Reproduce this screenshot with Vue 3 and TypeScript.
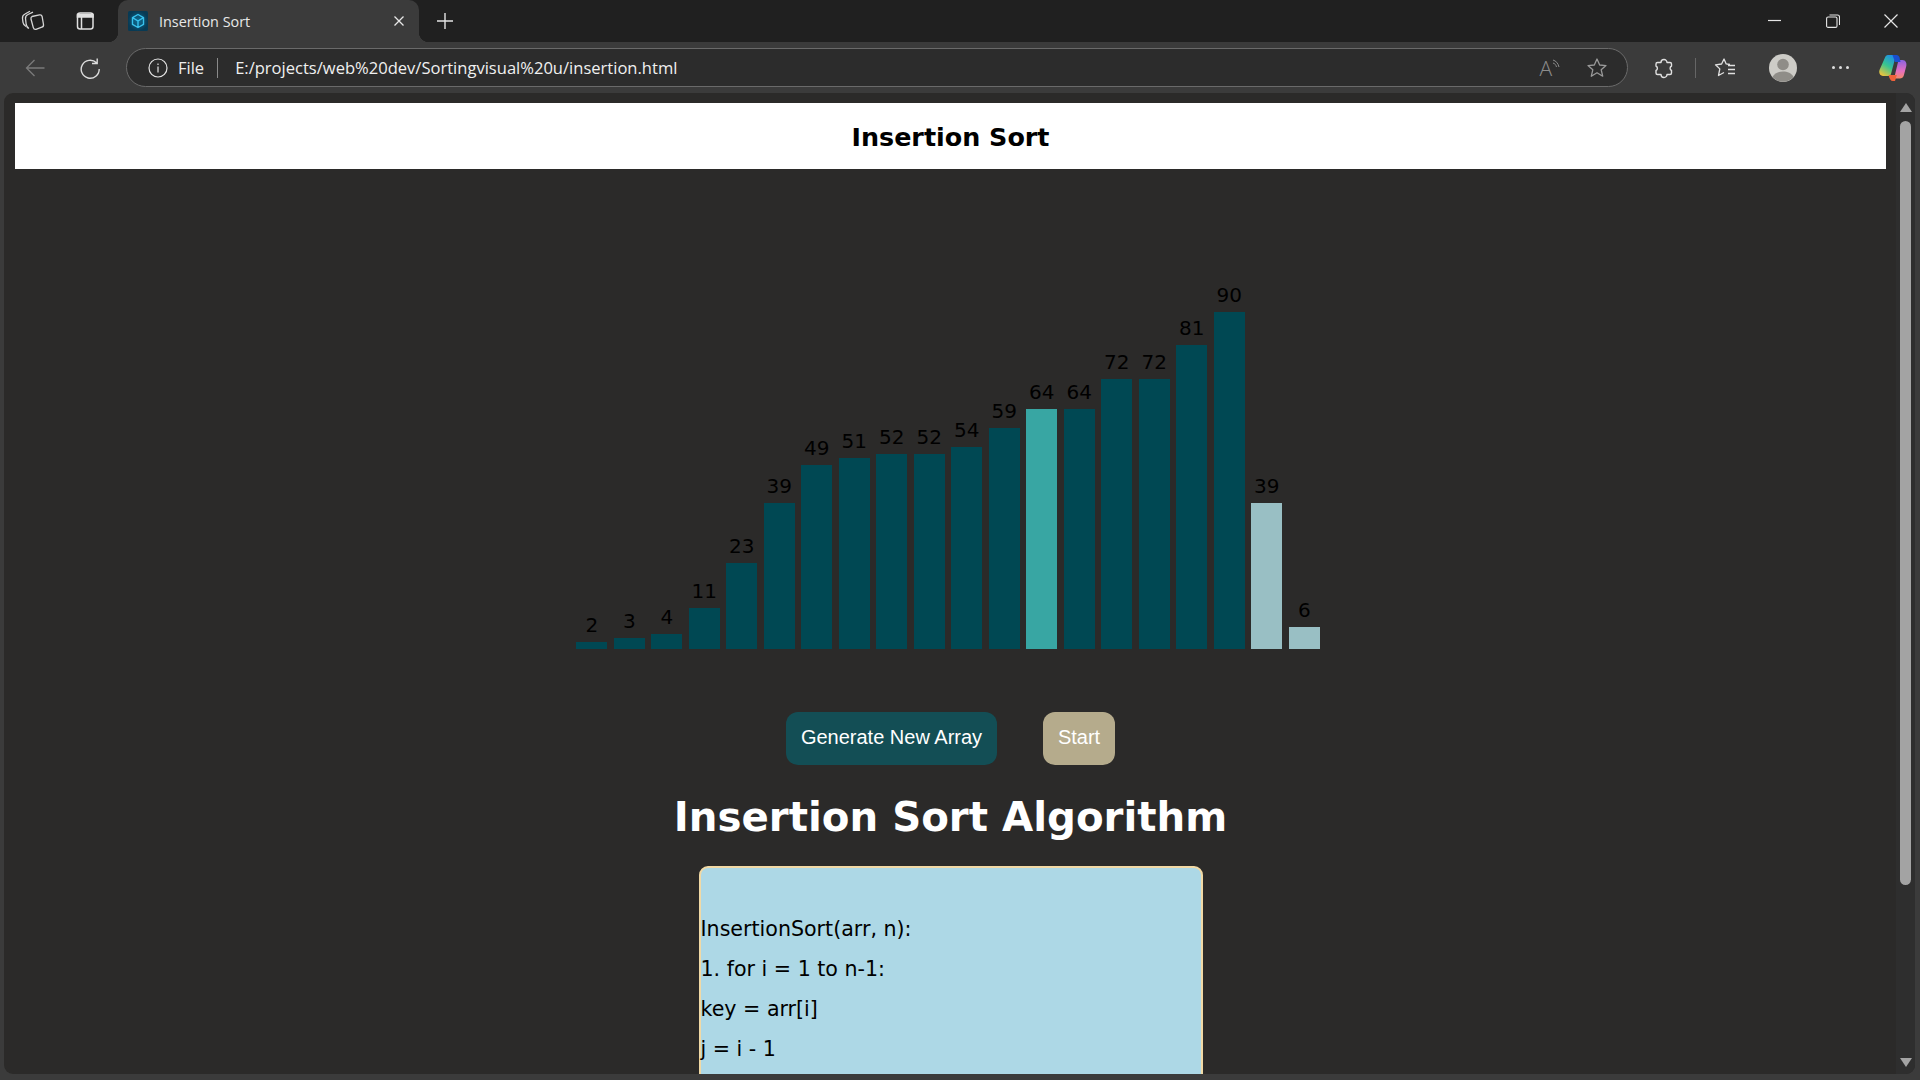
<script setup lang="ts">
interface Bar { value: number; height: number; kind: string }
const raw: [number, number, string][] = [
  [2, 7, 'sorted'], [3, 11, 'sorted'], [4, 15, 'sorted'], [11, 41, 'sorted'], [23, 86, 'sorted'],
  [39, 146, 'sorted'], [49, 184, 'sorted'], [51, 191, 'sorted'], [52, 195, 'sorted'], [52, 195, 'sorted'],
  [54, 202, 'sorted'], [59, 221, 'sorted'], [64, 240, 'active'], [64, 240, 'sorted'], [72, 270, 'sorted'],
  [72, 270, 'sorted'], [81, 304, 'sorted'], [90, 337, 'sorted'], [39, 146, 'pending'], [6, 22, 'pending']
]
const bars: Bar[] = raw.map(([value, height, kind]) => ({ value, height, kind }))
const lines = ['InsertionSort(arr, n):', '1. for i = 1 to n-1:', 'key = arr[i]', 'j = i - 1']
</script>

<template>
  <div class="window">
    <header class="tabstrip">
      <div class="strip-left">
        <svg class="ic" width="24" height="24" viewBox="0 0 24 24" fill="none" stroke="#d6d6d6" stroke-width="1.300">
          <path d="M11 7.500l7.500-1.600c1.300-.3 2.300.4 2.600 1.600l1.400 8c.2 1.300-.5 2.300-1.700 2.600L15 20.300c-1.300.3-2.300-.4-2.700-1.700l-2.300-8.600c-.2-1.100 0-2 1-2.500z" />
          <path d="M8 19.500C6.300 18.700 5.500 17 5.200 15.500L4.500 9.500C4.400 7.500 5.300 6.200 7 5.500l5-2.300" />
          <path d="M5 17.500c-1.600-.9-2.700-2.500-3-4.200l-.5-3.800c-.2-2.200.7-3.600 2.500-4.500l5-2.700" />
        </svg>
        <svg class="ic2" width="24" height="24" viewBox="0 0 24 24" fill="none" stroke="#e0e0e0" stroke-width="1.500">
          <rect x="4.500" y="4" width="15.500" height="16" rx="2.500" />
          <path d="M4.500 5.500h15.500v2.500H4.500z" fill="#e0e0e0" />
          <path d="M8.500 8v12" />
        </svg>
      </div>
      <div class="tab">
        <svg class="fav" width="20" height="20" viewBox="0 0 20 20">
          <defs>
            <radialGradient id="favbg">
              <stop offset="0" stop-color="#0f6d94" /><stop offset="1" stop-color="#083a54" />
            </radialGradient>
          </defs>
          <rect width="20" height="20" rx="1.500" fill="url(#favbg)" />
          <path d="M10 3.500l5.500 3.100v6.800L10 16.500l-5.500-3.100V6.600z M4.500 6.600L10 10l5.500-3.400M10 10v6.500" fill="none" stroke="#38c2ee" stroke-width="1.400" stroke-linejoin="round" />
        </svg>
        <span class="tab-title">Insertion Sort</span>
        <svg class="tab-x" width="12" height="12" viewBox="0 0 12 12" stroke="#e8e8e8" stroke-width="1.300">
          <path d="M1.500 1.500l9 9M10.500 1.500l-9 9" />
        </svg>
      </div>
      <svg class="plus" width="18" height="18" viewBox="0 0 18 18" stroke="#e4e4e4" stroke-width="1.400">
        <path d="M9 1v16M1 9h16" />
      </svg>
      <div class="win-controls">
        <svg width="14" height="14" viewBox="0 0 14 14" stroke="#e6e6e6" stroke-width="1.200"><path d="M0 6.500h13" /></svg>
        <svg width="14" height="14" viewBox="0 0 14 14" fill="none" stroke="#e6e6e6" stroke-width="1.100">
          <rect x=".6" y="3" width="10.400" height="10.400" rx="1.500" />
          <path d="M3.500 1h8a2 2 0 012 2v8" />
        </svg>
        <svg width="14" height="14" viewBox="0 0 14 14" stroke="#e6e6e6" stroke-width="1.200"><path d="M.5.500l13 13M13.500.500l-13 13" /></svg>
      </div>
    </header>

    <nav class="toolbar">
      <svg class="back" width="20" height="20" viewBox="0 0 20 20" fill="none" stroke="#7b7b7b" stroke-width="1.300">
        <path d="M19.500 10H1.500M9.500 2l-8 8 8 8" />
      </svg>
      <svg class="reload" width="22" height="22" viewBox="0 0 22 22" fill="none" stroke="#dcdcdc" stroke-width="1.400">
        <path d="M17.500 5.800A9 9 0 1020.200 12M18.200 1.500v5h-5.200" />
      </svg>
      <div class="omnibox">
        <svg width="20" height="20" viewBox="0 0 20 20" fill="none" stroke="#e4e4e4" stroke-width="1.200">
          <circle cx="10" cy="10" r="9" />
          <path d="M10 8.500v6M10 5.500v1.500" />
        </svg>
        <span class="file">File</span>
        <span class="sep"></span>
        <span class="url">E:/projects/web%20dev/Sortingvisual%20u/insertion.html</span>
        <span class="spacer"></span>
        <span class="aa">A<svg width="10" height="12" viewBox="0 0 10 12" fill="none" stroke="#8c8c8c" stroke-width="1"><path d="M1 1c3 1 5 3 6 7M1 4c2 .6 3 2 3.500 4" /></svg></span>
        <svg class="star" width="22" height="22" viewBox="0 0 22 22" fill="none" stroke="#9a9a9a" stroke-width="1.300">
          <path d="M11 2l2.700 6 6.300.6-4.800 4.200 1.500 6.400L11 15.800l-5.700 3.400 1.500-6.400L2 8.600 8.300 8z" stroke-linejoin="round" />
        </svg>
      </div>
      <svg class="puzzle" width="22" height="22" viewBox="0 0 22 22" fill="none" stroke="#e0e0e0" stroke-width="1.400">
        <path d="M3 7a1.500 1.500 0 011.500-1.500H8a3 3 0 016 0h3a1.500 1.500 0 011.500 1.500v2a2.500 2.500 0 000 4.500v2.500a1.500 1.500 0 01-1.500 1.500h-3a3 3 0 01-6 0H4.500A1.500 1.500 0 013 16v-2.500a2.500 2.500 0 000-4.500z" stroke-linejoin="round" />
      </svg>
      <span class="divider"></span>
      <svg class="favs" width="22" height="22" viewBox="0 0 22 22" fill="none" stroke="#e0e0e0" stroke-width="1.300">
        <path d="M16 7.500l-3.800-.6L10 2 7.600 7 1.500 7.800l4.300 4.100L4.500 18.500l5.500-3" stroke-linejoin="round" />
        <path d="M14 8.500h7M14 12.500h7M14 16.500h7" />
      </svg>
      <div class="avatar">
        <svg width="28" height="28" viewBox="0 0 28 28">
          <circle cx="14" cy="14" r="14" fill="#cdccc7" />
          <circle cx="14" cy="10.500" r="5.800" fill="#8f8d88" />
          <path d="M3.500 23c2-4 6-5.500 10.500-5.500s8.500 1.500 10.500 5.500a14 14 0 01-21 0z" fill="#8f8d88" />
        </svg>
      </div>
      <div class="dots"><i></i><i></i><i></i></div>
      <svg class="copilot" width="28" height="28" viewBox="0 0 28 28">
        <defs>
          <linearGradient id="cpa" x1="0.700" y1="0" x2="0.200" y2="1">
            <stop offset="0" stop-color="#1e8fe6" /><stop offset=".5" stop-color="#38c58f" /><stop offset="1" stop-color="#f3c33a" />
          </linearGradient>
          <linearGradient id="cpb" x1="0.500" y1="0" x2="0.500" y2="1">
            <stop offset="0" stop-color="#8a63e0" /><stop offset=".6" stop-color="#e66fc0" /><stop offset="1" stop-color="#f58a6a" />
          </linearGradient>
        </defs>
        <path d="M9 1h8l-5 19c-.5 1.500-1.500 2-3 2H4c-3 0-4.500-3-3.500-6L6 3.500C6.500 2 7.500 1 9 1z" fill="url(#cpa)" />
        <path d="M19 6h4.500c3 0 4.500 3 3.800 6l-2.500 9.500c-.5 2-2 3-4 3h-7l2-3 3.700-15.500z" fill="url(#cpb)" />
        <path d="M13.500 1h4c1.500 0 2.500 1 3 2.500L21.500 8H16z" fill="#1a4fd0" />
        <path d="M9.500 21h8.300l-1.800 6h-2.500c-1.500 0-3-2-4-6z" fill="#f0623a" />
      </svg>
    </nav>

    <div class="viewport">
      <main class="page">
        <div class="title-bar">Insertion Sort</div>
        <section class="chart">
          <div v-for="(b, i) in bars" :key="i" class="col">
            <span class="val">{{ b.value }}</span>
            <div class="bar" :class="b.kind" :style="{ height: b.height + 'px' }"></div>
          </div>
        </section>
        <div class="buttons">
          <button class="btn gen">Generate New Array</button>
          <button class="btn start">Start</button>
        </div>
        <h1 class="algo-title">Insertion Sort Algorithm</h1>
        <div class="code">
          <p v-for="l in lines" :key="l">{{ l }}</p>
        </div>
      </main>
      <aside class="scrollbar">
        <span class="arrow up"></span>
        <div class="track"><div class="thumb"></div></div>
        <span class="arrow down"></span>
      </aside>
    </div>
  </div>
</template>

<style>
html, body { margin: 0; background: #3b3b3b; overflow: hidden; }
</style>

<style scoped>
.window { width: 1920px; height: 1080px; display: flex; flex-direction: column; overflow: hidden; background: #3b3b3b; font-family: "Open Sans", "Noto Sans", sans-serif; }
.tabstrip { height: 42px; flex: none; background: #202020; display: flex; align-items: flex-start; }
.strip-left { display: flex; align-items: center; width: 118px; height: 42px; padding-left: 21px; box-sizing: border-box; flex: none; }
.ic2 { margin-left: 28px; }
.tab { width: 301px; height: 42px; background: #3b3b3b; border-radius: 10px 10px 0 0; display: flex; align-items: center; box-sizing: border-box; padding: 0 14px 0 10px; color: #e8e8e8; font-size: 14.400px; position: relative; flex: none; }
.tab::before, .tab::after { content: ""; position: absolute; bottom: 0; width: 10px; height: 10px; }
.tab::before { left: -10px; background: radial-gradient(circle at 0 0, transparent 10px, #3b3b3b 10.500px); }
.tab::after { right: -10px; background: radial-gradient(circle at 100% 0, transparent 10px, #3b3b3b 10.500px); }
.fav { flex: none; }
.tab-title { margin-left: 11px; flex: 1; }
.plus { margin: 12px 0 0 17px; flex: none; }
.win-controls { margin-left: auto; display: flex; gap: 44px; padding: 14px 22px 0 0; }
.toolbar { height: 51px; flex: none; background: #3b3b3b; display: flex; align-items: center; box-sizing: border-box; }
.back { margin-left: 25px; flex: none; }
.reload { margin-left: 34px; flex: none; }
.omnibox { width: 1502px; height: 39px; flex: none; margin-left: 25px; box-sizing: border-box; border: 1px solid #6a6a6a; border-radius: 20px; background: #2c2c2c; display: flex; align-items: center; padding: 0 19px 0 21px; color: #ececec; font-size: 16.500px; }
.file { margin-left: 10px; }
.sep { width: 1px; height: 20px; background: #8a8a8a; margin: 0 17px 0 13px; }
.url { color: #f0f0f0; font-size: 16.560px; }
.spacer { flex: 1; }
.aa { color: #8c8c8c; font-size: 21px; font-weight: 300; display: flex; align-items: flex-start; margin-right: 24px; line-height: 24px; }
.aa svg { margin-top: 3px; }
.puzzle { margin-left: 25px; flex: none; }
.divider { width: 1px; height: 20px; background: #666; margin-left: 20px; flex: none; }
.favs { margin-left: 18px; flex: none; }
.avatar { margin-left: 33px; height: 28px; flex: none; }
.dots { display: flex; gap: 4px; margin-left: 35px; width: 17px; flex: none; }
.dots i { width: 3px; height: 3px; border-radius: 50%; background: #dedede; flex: none; }
.copilot { margin-left: 30px; flex: none; }
.viewport { flex: 1; min-height: 0; background: #2b2a29; border-radius: 9px; margin: 0 5px 6px 4px; padding: 0 0 0 11px; display: flex; overflow: hidden; }
.page { width: 1871px; flex: none; display: flex; flex-direction: column; align-items: center; overflow: hidden; padding-top: 10px; box-sizing: border-box; font-family: "DejaVu Sans", Verdana, sans-serif; }
.title-bar { width: 100%; height: 66px; flex: none; box-sizing: border-box; padding-top: 2px; background: #fff; color: #000; font-weight: 700; font-size: 25.400px; display: flex; align-items: center; justify-content: center; }
.chart { height: 480px; flex: none; display: flex; align-items: flex-end; gap: 6.500px; box-sizing: border-box; padding-right: 5px; }
.col { width: 31px; display: flex; flex-direction: column; align-items: center; }
.val { color: #000; font-size: 20px; line-height: 22px; margin-bottom: 6px; }
.bar { width: 31px; }
.sorted { background: #004853; }
.active { background: #38a6a3; }
.pending { background: #99bfc4; }
.buttons { display: flex; gap: 46px; margin-top: 63px; flex: none; }
.btn { height: 53px; border: none; border-radius: 12px; color: #fff; font-family: "Liberation Sans", Arial, sans-serif; font-size: 20px; padding: 0 0 2px; white-space: nowrap; }
.gen { background: #134e55; width: 211px; }
.start { background: #b5ab8c; width: 72px; }
.algo-title { color: #fff; font-size: 40.300px; font-weight: 700; line-height: 52px; margin: 27px 0 0; flex: none; }
.code { width: 504px; flex: none; box-sizing: border-box; border: 2px solid #f1d9a5; border-radius: 9px; background: #add8e6; color: #000; font-size: 20.600px; margin-top: 22px; padding-top: 41px; height: 300px; }
.code p { margin: 0; line-height: 40px; }
.scrollbar { width: 19px; flex: none; margin-left: 10px; display: flex; flex-direction: column; align-items: center; padding-top: 10px; box-sizing: border-box; background: #2e2e2e; }
.arrow { width: 0; height: 0; border-left: 6px solid transparent; border-right: 6px solid transparent; flex: none; }
.up { border-bottom: 9px solid #a3a3a3; }
.down { border-top: 9px solid #a3a3a3; margin-bottom: 7px; }
.track { flex: 1; width: 100%; display: flex; justify-content: center; padding-top: 9px; box-sizing: border-box; }
.thumb { width: 11px; height: 764px; background: #a3a3a3; border-radius: 5.500px; }
</style>
